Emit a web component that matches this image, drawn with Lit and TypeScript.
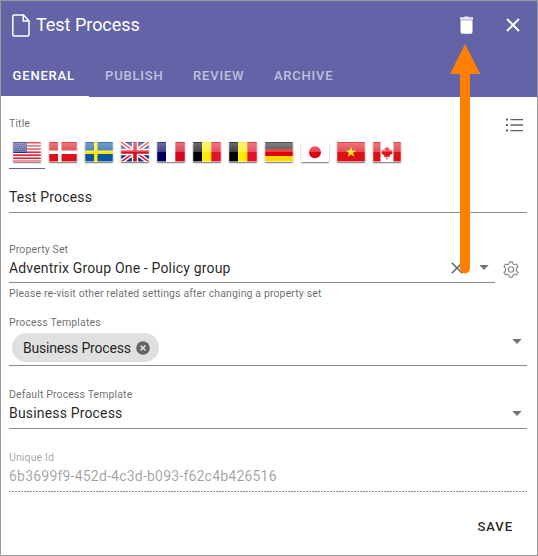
import { LitElement, html, css, svg } from "lit";
import { customElement, property } from "lit/decorators.js";

const vertical = (a: string, b: string, c: string) => svg`
  <rect width="9.4" height="20" fill=${a}/><rect x="9" width="9.4" height="20" fill=${b}/><rect x="18.3" width="9.7" height="20" fill=${c}/>`;
const horizontal = (a: string, b: string, c: string) => svg`
  <rect width="28" height="7" fill=${a}/><rect y="7" width="28" height="7" fill=${b}/><rect y="14" width="28" height="6" fill=${c}/>`;

const flags: Record<string, unknown> = {
  us: svg`<rect width="28" height="20" fill="#fff"/>
    ${[0, 1, 2, 3, 4, 5, 6].map((i) => svg`<rect y=${i * 3.08} width="28" height="1.7" fill="#e0263a"/>`)}
    <rect width="14" height="11" fill="#252d82"/>
    ${[0, 1, 2, 3, 4].map((r) => [0, 1, 2, 3, 4, 5].map((c) => svg`<rect x=${0.8 + c * 2.2 + (r % 2)} y=${0.8 + r * 2} width=".9" height=".9" fill="#a8acd4"/>`))}`,
  dk: svg`<rect width="28" height="20" fill="#dd1119"/><path d="M9 0h3.500v8.500H28v3.500H12.500v8H9v-8H0V8.500h9z" fill="#fff"/>`,
  se: svg`<rect width="28" height="20" fill="#0b57a2"/><path d="M9 0h3.500v8.500H28v3.500H12.500v8H9v-8H0V8.500h9z" fill="#ffe800"/>`,
  gb: svg`<rect width="28" height="20" fill="#14257c"/>
    <path d="M0 0L28 20M28 0L0 20" stroke="#fff" stroke-width="4.500"/><path d="M0 0L28 20M28 0L0 20" stroke="#dd1628" stroke-width="1.500"/>
    <path d="M14 0v20M0 10h28" stroke="#fff" stroke-width="6.400"/><path d="M14 0v20M0 10h28" stroke="#d80b20" stroke-width="3.600"/>`,
  fr: vertical("#00005f", "#fff", "#d4071e"),
  be: vertical("#000", "#ffec00", "#e3122a"),
  de: horizontal("#222", "#dd0000", "#fbd900"),
  jp: svg`<rect width="28" height="20" fill="#fff"/><circle cx="14" cy="10.300" r="6" fill="#df0012"/>`,
  vn: svg`<rect width="28" height="20" fill="#dc1016"/><path d="M14 4.800l1.300 3.700h3.900l-3.100 2.400 1.200 3.800-3.300-2.300-3.300 2.300 1.200-3.800-3.100-2.400h3.900z" fill="#ffe600"/>`,
  ca: svg`<rect width="28" height="20" fill="#fff"/><path d="M0 0h7.500v20H0zM20.500 0H28v20h-7.500z" fill="#dd1118"/>
    <path d="M14 4.300l1.300 2 1.300-.5-.5 3 1.700-1.300.5 1.100 1.400-.2-.6 1.900.8.600-3.300 2.700.2 1.300-2.400-.3.100 3h-1l.1-3-2.400.3.200-1.300-3.300-2.700.8-.6-.6-1.900 1.400.2.500-1.100 1.700 1.300-.5-3 1.300.5z" fill="#dd1118"/>`,
};

@customElement("flag-icon")
export class FlagIcon extends LitElement {
  @property() code = "us";
  static styles = css`
    :host { display: block; width: 28px; height: 20px; position: relative; box-shadow: 0 1px 1.5px rgba(0, 0, 0, .55); border-radius: 1px; overflow: hidden; }
    svg { display: block; }
    .gloss { position: absolute; inset: 0; background: linear-gradient(rgba(255,255,255,.42), rgba(255,255,255,.25) 50%, transparent 50%); border: 1px solid rgba(255,255,255,.22); box-sizing: border-box; }
  `;
  render() {
    return html`<svg width="28" height="20" viewBox="0 0 28 20">${flags[this.code]}</svg><div class="gloss"></div>`;
  }
}

@customElement("app-root")
export class AppRoot extends LitElement {
  static styles = css`
    :host { display: block; font-family: Roboto, sans-serif; color: rgba(0,0,0,.87); }
    * { box-sizing: border-box; }
    svg { display: block; flex: none; }
    .panel { position: relative; width: 538px; height: 556px; border: 1px solid #999; background: #fff; overflow: hidden; display: flex; flex-direction: column; }
    header { height: 96px; flex: none; background: #6264a7; color: #fff; display: flex; flex-direction: column; }
    .bar { height: 48px; flex: none; display: flex; align-items: center; padding: 0 17px 0 11px; }
    .bar h1 { margin: 0 auto 0 6px; font-size: 18px; font-weight: 400; line-height: 24px; letter-spacing: -.03px; }
    .trash { margin-right: 33px; }
    .tabs { flex: 1; display: flex; margin-left: -4px; }
    .tab { padding: 6px 14px 0 15.6px; height: 48px; line-height: 41px; font-size: 13px; font-weight: 500; letter-spacing: .8px; color: rgba(255,255,255,.6); }
    .tab.active { color: #fff; border-bottom: 1px solid #fff; padding-right: 14.700px; }
    main { flex: 1; display: flex; flex-direction: column; padding: 0 10px 0 8px; font-size: 14px; }
    .label { font-size: 10.5px; line-height: 14px; letter-spacing: .13px; color: rgba(0,0,0,.6); }
    .value { line-height: 20px; letter-spacing: .17px; }
    .field { border-bottom: 1px solid #8c8c8c; display: flex; flex-direction: column; }
    .heading { display: flex; height: 42px; padding: 20px 3px 0 0; justify-content: space-between; align-items: flex-start; }
    .languages { display: flex; height: 30px; }
    .language { width: 36px; padding: 3px 0 0 4px; }
    .language.active { border-bottom: 1px solid #6264a7; }
    .name { height: 44px; padding-top: 18px; }
    .with-settings { display: flex; height: 70px; }
    .property { width: 486px; padding-top: 30px; }
    .line { display: flex; align-items: center; height: 22px; }
    .line .value { flex: 1; margin-top: -1px; }
    .clear { margin: -1px 16px 0 0; }
    .caret { margin-right: 5px; }
    .property .caret { margin: -1px 6px 0 0; }
    .gear { margin: 48px 0 0 8px; }
    .hint { padding-top: 4px; height: 25px; letter-spacing: .125px; }
    .templates { height: 58px; padding-top: 8px; }
    .chips { display: flex; align-items: center; }
    .chip { margin: 3px 0 0 3px; width: 147px; height: 29px; border-radius: 15px; background: #e0e0e0; display: flex; align-items: center; padding: 0 9px 0 11px; justify-content: space-between; letter-spacing: -.19px; }
    .chips .caret { margin: -10px 5px 0 auto; }
    .default { height: 63px; padding-top: 22px; }
    .default .caret { margin-top: 1px; }
    .disabled { height: 63px; padding-top: 22px; border-bottom: 0; color: rgba(0,0,0,.38); }
    .disabled .label { color: rgba(0,0,0,.38); }
    .disabled .value { letter-spacing: .21px; padding-top: 1px; }
    .dashes { height: 1px; margin-top: auto; background: repeating-linear-gradient(90deg, #8c8c8c 0 2px, transparent 2px 3px); }
    .save { align-self: flex-end; margin: 25px 14px 0 0; font-size: 13px; font-weight: 500; line-height: 20px; letter-spacing: .95px; }
    .pointer { position: absolute; left: 449px; top: 43px; }
  `;

  private caret = html`<svg class="caret" width="10" height="5" viewBox="0 0 10 5"><path d="M.3 0h9.400L5 4.900z" fill="#747474"/></svg>`;

  render() {
    return html`
      <div class="panel">
        <header>
          <div class="bar">
            <svg width="18" height="23" viewBox="0 0 18 23" fill="none" stroke="#fff" stroke-width="1.500"><path d="M2 1h9.500L17 7v13.500q0 1.500-1.500 1.500H2Q.8 22 .8 20.500V2.500Q.8 1 2 1zM11.200 1v6H17"/></svg>
            <h1>Test Process</h1>
            <svg class="trash" width="13" height="18" viewBox="0 0 13 18"><path d="M0 1.300h4L4.700.5h3.600L9 1.300h4v2.500H0z" fill="#e7e7f2"/><path d="M.5 4.200h12V16q0 1.800-1.800 1.800H2.300Q.5 17.800.5 16z" fill="#fff"/></svg>
            <svg width="14" height="14" viewBox="0 0 14 14" stroke="#fff" stroke-width="2" fill="none"><path d="M1 1l12 12M13 1L1 13"/></svg>
          </div>
          <nav class="tabs">
            <div class="tab active">GENERAL</div><div class="tab">PUBLISH</div><div class="tab">REVIEW</div><div class="tab">ARCHIVE</div>
          </nav>
        </header>
        <main>
          <div class="heading">
            <span class="label">Title</span>
            <svg width="18" height="16" viewBox="0 0 18 16" fill="#616161"><path d="M0 1.500h2v2H0zM0 7h2v2H0zM0 12.500h2v2H0zM4.500 2H17v1.300H4.500zM4.500 7.200H17v1.600H4.500zM4.500 13H17v1.300H4.500z"/></svg>
          </div>
          <div class="languages">
            ${["us", "dk", "se", "gb", "fr", "be", "be", "de", "jp", "vn", "ca"].map((code, i) => html`<div class=${i === 0 ? "language active" : "language"}><flag-icon .code=${code}></flag-icon></div>`)}
          </div>
          <div class="field name"><span class="value">Test Process</span></div>
          <div class="with-settings">
            <div class="field property">
              <span class="label">Property Set</span>
              <div class="line">
                <span class="value">Adventrix Group One - Policy group</span>
                <svg class="clear" width="12" height="12" viewBox="0 0 12 12" stroke="#666" stroke-width="1.500"><path d="M.8.800l10.400 10.400M11.200.800L.8 11.200"/></svg>
                ${this.caret}
              </div>
            </div>
            <svg class="gear" width="16" height="17" viewBox="0 0 16 17" fill="none" stroke="#858585" stroke-width="1.100"><path d="M6.600.9h2.800l.6 2 1.300.8 2.200-.7 1.500 2.500-1.600 1.700v2.600l1.600 1.700-1.500 2.500-2.200-.7-1.300.8-.6 2H6.600l-.6-2-1.300-.8-2.200.7L1 11.500l1.600-1.700V7.200L1 5.500 2.500 3l2.200.7L6 2.900z" stroke-linejoin="round"/><circle cx="8" cy="8.500" r="2.700"/></svg>
          </div>
          <div class="label hint">Please re-visit other related settings after changing a property set</div>
          <div class="field templates">
            <span class="label">Process Templates</span>
            <div class="chips">
              <span class="chip">Business Process
                <svg width="14" height="14" viewBox="0 0 14 14"><circle cx="7" cy="7" r="6.800" fill="#626262"/><path d="M4.500 4.500l5 5m0-5l-5 5" stroke="#e0e0e0" stroke-width="1.600"/></svg>
              </span>
              ${this.caret}
            </div>
          </div>
          <div class="field default">
            <span class="label">Default Process Template</span>
            <div class="line"><span class="value">Business Process</span>${this.caret}</div>
          </div>
          <div class="field disabled">
            <span class="label">Unique Id</span>
            <span class="value">6b3699f9-452d-4c3d-b093-f62c4b426516</span>
            <div class="dashes"></div>
          </div>
          <div class="save">SAVE</div>
        </main>
        <svg class="pointer" width="31" height="231" viewBox="0 0 31 231" fill="#ff8000"><path d="M15 0L30.200 30H20v194.500a5 5 0 0 1-10 0V30H0z"/></svg>
      </div>`;
  }
}
